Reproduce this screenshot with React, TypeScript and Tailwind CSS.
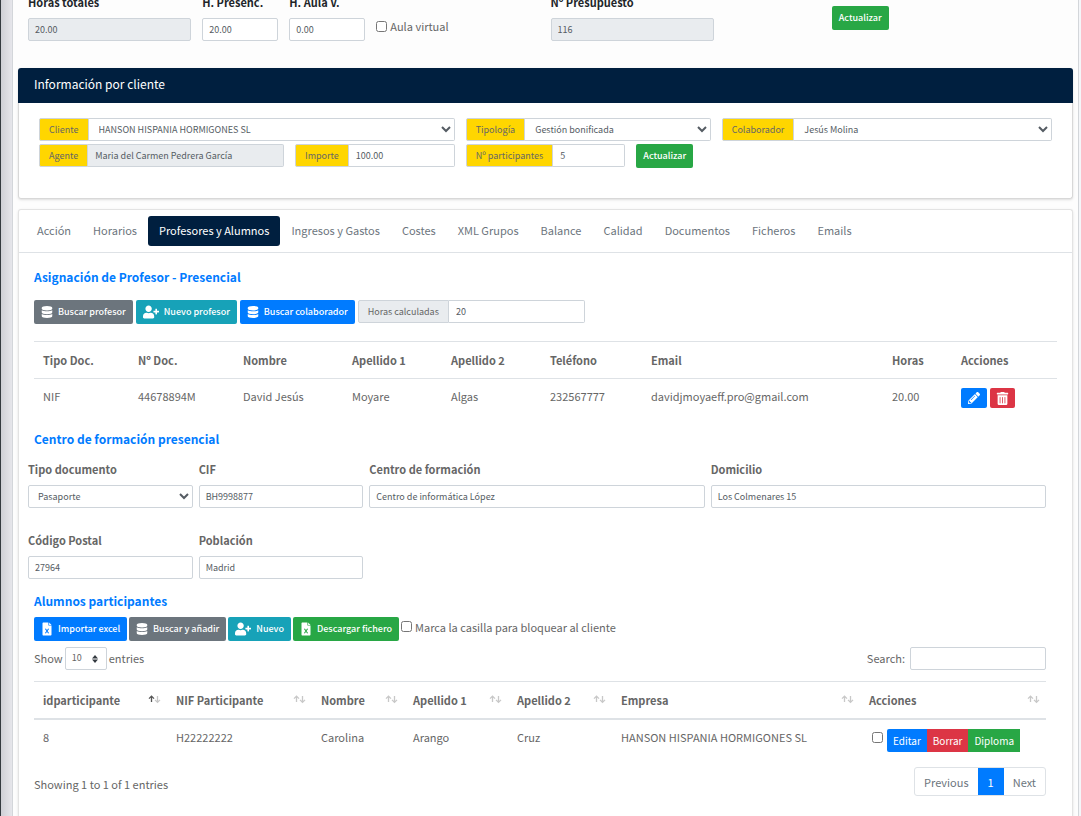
import React, { useState } from 'react';
import { FaDatabase, FaUserPlus, FaPencilAlt, FaTrashAlt } from 'react-icons/fa';

type Variant = 'primary' | 'secondary' | 'success' | 'danger' | 'info';

const variants: Record<Variant, string> = {
  primary: 'bg-[#007bff] hover:bg-[#0069d9]',
  secondary: 'bg-[#6c757d] hover:bg-[#5a6268]',
  success: 'bg-[#28a745] hover:bg-[#218838]',
  danger: 'bg-[#dc3545] hover:bg-[#c82333]',
  info: 'bg-[#17a2b8] hover:bg-[#138496]',
};

const control = 'h-[23px] w-full min-w-0 border border-[#ced4da] text-[9px] text-[#555c63] outline-none focus:border-[#80bdff]';

const Button: React.FC<{ variant: Variant; icon?: React.ReactNode; children: React.ReactNode }> = ({ variant, icon, children }) => (
  <button type="button" className={`flex h-6 shrink-0 items-center gap-[5px] rounded-xs px-[7px] text-[9px] font-medium whitespace-nowrap text-white ${variants[variant]}`}>
    {icon}
    {children}
  </button>
);

interface FieldProps {
  id: string;
  label: string;
  value: string;
  readOnly?: boolean;
  select?: boolean;
  className?: string;
  dark?: boolean;
}

// Label on top of its control
const Field: React.FC<FieldProps> = ({ id, label, value, readOnly, select, dark, className = '' }) => (
  <div className={className}>
    <label htmlFor={id} className={`block h-6 text-[11px] leading-4 font-bold whitespace-nowrap ${dark ? 'text-[#212529]' : ''}`}>
      {label}
    </label>
    {select ? (
      <select id={id} className={`${control} rounded-xs bg-white px-[5px]`} defaultValue={value}>
        <option>{value}</option>
      </select>
    ) : (
      <input id={id} type="text" readOnly={readOnly} defaultValue={value} className={`${control} rounded-xs px-1.5 ${readOnly ? 'bg-[#e9ecef]' : 'bg-white'}`} />
    )}
  </div>
);

// Label glued to the left side of its control
const GroupField: React.FC<FieldProps> = ({ id, label, value, readOnly, select, className = '' }) => (
  <div className={`flex ${className}`}>
    <label htmlFor={id} className="flex h-[23px] shrink-0 items-center rounded-l-xs border border-[#ced4da] bg-[#ffd600] px-[9px] text-[9px]">
      {label}
    </label>
    {select ? (
      <select id={id} className={`${control} rounded-r-xs border-l-0 bg-white px-1.5`} defaultValue={value}>
        <option>{value}</option>
      </select>
    ) : (
      <input id={id} type="text" readOnly={readOnly} defaultValue={value} className={`${control} rounded-r-xs border-l-0 px-[7px] ${readOnly ? 'bg-[#e9ecef]' : 'bg-white'}`} />
    )}
  </div>
);

const SortArrows: React.FC<{ active?: boolean }> = ({ active }) => (
  <svg viewBox="0 0 13 9" className="h-[9px] w-[13px] shrink-0" fill="none" strokeWidth="1.3">
    <path d="M3.5 7V1.2M1 3.6 3.5 1.1 6 3.6" stroke={active ? '#555555' : '#c8c8c8'} />
    <path d="M9.5 1v6.3M7 4.9l2.5 2.5L12 4.9" stroke="#c8c8c8" />
  </svg>
);

const ExcelIcon: React.FC<{ mark: string }> = ({ mark }) => (
  <svg viewBox="0 0 12 14" className="h-3.5 w-3" fill="none">
    <path d="M1.5 1.5c0-.6.4-1 1-1h4.9v3.1h3.1v8.9c0 .6-.4 1-1 1h-7c-.6 0-1-.4-1-1z" fill="#ffffff" />
    <path d="M8.1.5 10.5 2.9H8.1z" fill="#ffffff" />
    <path d="m4.4 6.8 3.2 4.4M7.6 6.8l-3.2 4.4" stroke={mark} strokeWidth="1.1" />
  </svg>
);

const tabs = ['Acción', 'Horarios', 'Profesores y Alumnos', 'Ingresos y Gastos', 'Costes', 'XML Grupos', 'Balance', 'Calidad', 'Documentos', 'Ficheros', 'Emails'];

const teacherColumns = [
  { name: 'Tipo Doc.', width: 'w-[95px]', value: 'NIF' },
  { name: 'Nº Doc.', width: 'w-[105px]', value: '44678894M' },
  { name: 'Nombre', width: 'w-[109px]', value: 'David Jesús' },
  { name: 'Apellido 1', width: 'w-[99px]', value: 'Moyare' },
  { name: 'Apellido 2', width: 'w-[99px]', value: 'Algas' },
  { name: 'Teléfono', width: 'w-[101px]', value: '232567777' },
  { name: 'Email', width: '', value: 'davidjmoyaeff.pro@gmail.com' },
  { name: 'Horas', width: 'w-[69px]', value: '20.00' },
];

const studentColumns = [
  { name: 'idparticipante', width: 'w-[133px]', value: '8' },
  { name: 'NIF Participante', width: 'w-[145px]', value: 'H22222222' },
  { name: 'Nombre', width: 'w-[92px]', value: 'Carolina' },
  { name: 'Apellido 1', width: 'w-[104px]', value: 'Arango' },
  { name: 'Apellido 2', width: 'w-[104px]', value: 'Cruz' },
  { name: 'Empresa', width: '', value: 'HANSON HISPANIA HORMIGONES SL' },
];

const App: React.FC = () => {
  const [activeTab, setActiveTab] = useState('Profesores y Alumnos');

  return (
    <div className="flex min-h-screen overflow-hidden border-l border-[#343a40] bg-[#f4f6f9] font-['Noto_Sans_CJK_SC','Source_Sans_Pro',sans-serif] text-[11px] leading-4 text-[#666666]">
      <div className="w-[11px] shrink-0 bg-linear-to-r from-[#cfd0d6] to-[#e6e6eb]" />
      <main className="mr-0.5 min-w-0 grow border-x border-[#d3d6da] bg-[#fdfdfd] px-[5px]">
        {/* Group hours */}
        <div className="-mt-1.5 mr-[11px] ml-2.5 grid h-[74px] grid-cols-12 gap-x-[11px]">
          <Field id="horas" label="Horas totales" value="20.00" readOnly dark className="col-span-2" />
          <Field id="presencial" label="H. Presenc." value="20.00" dark />
          <Field id="aula" label="H. Aula V." value="0.00" dark />
          <label className="col-span-2 mt-6 flex h-4 items-center gap-[3px]">
            <input type="checkbox" className="size-[11px]" />
            Aula virtual
          </label>
          <Field id="presupuesto" label="Nº Presupuesto" value="116" readOnly dark className="col-span-2" />
          <div className="col-span-3 col-start-10 mt-3 pl-5">
            <Button variant="success">Actualizar</Button>
          </div>
        </div>

        {/* Client info */}
        <section className="rounded-[3px] bg-white shadow-sm">
          <h2 className="flex h-[35px] items-center rounded-t-[3px] bg-[#001f3f] px-4 pb-1 text-xs text-white">Información por cliente</h2>
          <div className="grid grid-cols-12 gap-x-[11px] gap-y-[3px] rounded-b-[3px] border border-t-0 border-[#d8d8d8] px-5 pt-[15px] pb-[30px]">
            <GroupField id="cliente" label="Cliente" value="HANSON HISPANIA HORMIGONES SL" select className="col-span-5" />
            <GroupField id="tipologia" label="Tipología" value="Gestión bonificada" select className="col-span-3" />
            <GroupField id="colaborador" label="Colaborador" value="Jesús Molina" select className="col-span-4" />
            <GroupField id="agente" label="Agente" value="Maria del Carmen Pedrera García" readOnly className="col-span-3" />
            <GroupField id="importe" label="Importe" value="100.00" className="col-span-2" />
            <GroupField id="participantes" label="Nº participantes" value="5" className="col-span-2" />
            <div className="col-span-2">
              <Button variant="success">Actualizar</Button>
            </div>
          </div>
        </section>

        {/* Tabs */}
        <section className="mt-2.5 rounded-t-[3px] border border-b-0 border-[#e3e3e3] bg-white shadow-sm">
          <nav className="flex border-b border-[#dee2e6] px-[7px] py-1.5">
            {tabs.map((tab) => (
              <a
                key={tab}
                href="#"
                onClick={(e) => {
                  e.preventDefault();
                  setActiveTab(tab);
                }}
                className={`flex h-[30px] items-center rounded-[3px] px-[11px] pb-0.5 whitespace-nowrap ${activeTab === tab ? 'bg-[#001f3f] text-white' : 'text-[#6c757d] hover:text-[#007bff]'}`}
              >
                {tab}
              </a>
            ))}
          </nav>

          <div className="px-[15px] pt-4 pb-5">
            <h3 className="text-xs leading-4 font-bold text-[#007bff]">Asignación de Profesor - Presencial</h3>
            <div className="mt-[15px] flex gap-[3px]">
              <Button variant="secondary" icon={<FaDatabase size={12} />}>Buscar profesor</Button>
              <Button variant="info" icon={<FaUserPlus size={16} />}>Nuevo profesor</Button>
              <Button variant="primary" icon={<FaDatabase size={12} />}>Buscar colaborador</Button>
              <div className="flex w-[227px]">
                <label htmlFor="calculadas" className="flex h-[23px] shrink-0 items-center rounded-l-xs border border-[#ced4da] bg-[#e9ecef] px-[9px] text-[9px]">
                  Horas calculadas
                </label>
                <input id="calculadas" type="text" defaultValue="20" className={`${control} rounded-r-xs border-l-0 bg-white px-[7px]`} />
              </div>
            </div>

            <table className="mt-[17px] w-full table-fixed text-left">
              <thead>
                <tr className="h-[37px] border-y border-[#dee2e6]">
                  {teacherColumns.map((col) => (
                    <th key={col.name} className={`px-[9px] font-bold ${col.width}`}>{col.name}</th>
                  ))}
                  <th className="w-[105px] px-[9px] font-bold">Acciones</th>
                </tr>
              </thead>
              <tbody>
                <tr className="h-[38px] align-top">
                  {teacherColumns.map((col) => (
                    <td key={col.name} className="px-[9px] pt-[9px] whitespace-nowrap">{col.value}</td>
                  ))}
                  <td className="px-[9px] pt-[9px]">
                    <div className="flex gap-[3px]">
                      <button type="button" aria-label="Editar profesor" className="flex h-5 w-[26px] items-center justify-center rounded-xs bg-[#007bff] text-white">
                        <FaPencilAlt size={12} />
                      </button>
                      <button type="button" aria-label="Borrar profesor" className="flex h-5 w-[25px] items-center justify-center rounded-xs bg-[#dc3545] text-white">
                        <FaTrashAlt size={13} />
                      </button>
                    </div>
                  </td>
                </tr>
              </tbody>
            </table>

            <h3 className="mt-3.5 text-xs leading-4 font-bold text-[#007bff]">Centro de formación presencial</h3>
            <div className="mt-3.5 mr-[11px] -ml-1.5 grid grid-cols-12 gap-x-1.5 gap-y-6">
              <Field id="tipodoc" label="Tipo documento" value="Pasaporte" select className="col-span-2" />
              <Field id="cif" label="CIF" value="BH9998877" className="col-span-2" />
              <Field id="centro" label="Centro de formación" value="Centro de informática López" className="col-span-4" />
              <Field id="domicilio" label="Domicilio" value="Los Colmenares 15" className="col-span-4" />
              <Field id="cp" label="Código Postal" value="27964" className="col-span-2" />
              <Field id="poblacion" label="Población" value="Madrid" className="col-span-2" />
            </div>

            <h3 className="mt-3.5 text-xs leading-4 font-bold text-[#007bff]">Alumnos participantes</h3>
            <div className="mt-2 flex gap-0.5">
              <Button variant="primary" icon={<ExcelIcon mark="#007bff" />}>Importar excel</Button>
              <Button variant="secondary" icon={<FaDatabase size={12} />}>Buscar y añadir</Button>
              <Button variant="info" icon={<FaUserPlus size={16} />}>Nuevo</Button>
              <Button variant="success" icon={<ExcelIcon mark="#28a745" />}>Descargar fichero</Button>
              <label className="flex h-5 items-center gap-[3px]">
                <input type="checkbox" className="size-[11px]" />
                Marca la casilla para bloquear al cliente
              </label>
            </div>

            <div className="mr-[11px]">
              <div className="mt-1.5 flex items-center justify-between">
                <label className="flex items-center gap-0.5">
                  Show
                  <span className="relative">
                    <select className="h-[23px] w-[42px] appearance-none rounded-xs border border-[#ced4da] bg-white px-1.5 text-[9px]" defaultValue="10">
                      <option>10</option>
                      <option>25</option>
                      <option>50</option>
                    </select>
                    <svg viewBox="0 0 6 8" className="pointer-events-none absolute top-2 right-[9px] h-2 w-1.5" fill="#343a40">
                      <path d="M3 0 6 3.4H0zM3 8 0 4.6h6z" />
                    </svg>
                  </span>
                  entries
                </label>
                <label className="flex items-center gap-[5px]">
                  Search:
                  <input type="search" className="h-[23px] w-[136px] rounded-xs border border-[#ced4da] bg-white px-1.5 text-[9px] outline-none" />
                </label>
              </div>

              <table className="mt-[11px] w-full table-fixed text-left">
                <thead>
                  <tr className="h-[38px] border-t border-b-2 border-[#dee2e6]">
                    {studentColumns.map((col, i) => (
                      <th key={col.name} className={`pr-1.5 pl-[9px] font-bold ${col.width}`}>
                        <span className="flex items-center justify-between whitespace-nowrap">
                          {col.name}
                          <SortArrows active={i === 0} />
                        </span>
                      </th>
                    ))}
                    <th className="w-[186px] pr-1.5 pl-[9px] font-bold">
                      <span className="flex items-center justify-between">
                        Acciones
                        <SortArrows />
                      </span>
                    </th>
                  </tr>
                </thead>
                <tbody>
                  <tr className="h-[38px] align-top">
                    {studentColumns.map((col) => (
                      <td key={col.name} className="px-[9px] pt-[9px] whitespace-nowrap">{col.value}</td>
                    ))}
                    <td className="px-[9px] pt-[9px]">
                      <div className="flex items-start pl-[3px]">
                        <input type="checkbox" aria-label="Seleccionar alumno" className="mt-[3px] mr-1 size-[11px]" />
                        <button type="button" className="h-[23px] rounded-l-xs bg-[#007bff] px-1.5 text-[10px] text-white">Editar</button>
                        <button type="button" className="h-[23px] bg-[#dc3545] px-1.5 text-[10px] text-white">Borrar</button>
                        <button type="button" className="h-[23px] bg-[#28a745] px-1.5 text-[10px] text-white">Diploma</button>
                      </div>
                    </td>
                  </tr>
                </tbody>
              </table>

              <div className="mt-2.5 flex items-center justify-between">
                <p className="pt-1">Showing 1 to 1 of 1 entries</p>
                <div className="flex h-[29px] overflow-hidden rounded-[3px] border border-[#dee2e6] text-[#6c757d]">
                  <button type="button" className="px-[9px]">Previous</button>
                  <button type="button" className="bg-[#007bff] px-2.5 text-white">1</button>
                  <button type="button" className="px-[9px]">Next</button>
                </div>
              </div>
            </div>
          </div>
        </section>
      </main>
    </div>
  );
};

export default App;
